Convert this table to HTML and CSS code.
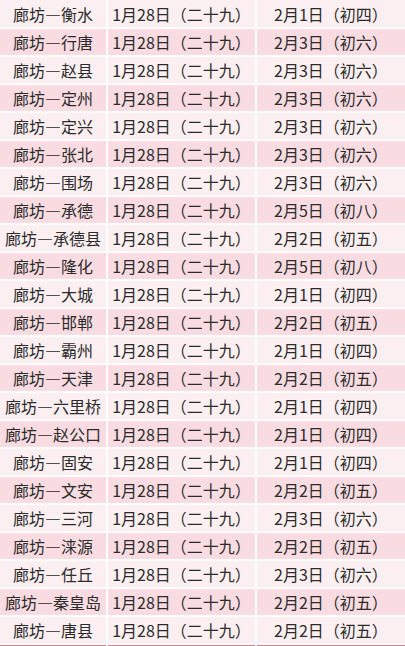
FILE: index.html
```html
<!DOCTYPE html>
<html lang="zh">
<head>
<meta charset="utf-8">
<link rel="stylesheet" href="styles.css">
</head>
<body>
<div class="table">
  <div class="row light"><div class="c">廊坊—衡水</div><div class="c">1月28日（二十九）</div><div class="c">2月1日（初四）</div></div>
  <div class="row dark"><div class="c">廊坊—行唐</div><div class="c">1月28日（二十九）</div><div class="c">2月3日（初六）</div></div>
  <div class="row light"><div class="c">廊坊—赵县</div><div class="c">1月28日（二十九）</div><div class="c">2月3日（初六）</div></div>
  <div class="row dark"><div class="c">廊坊—定州</div><div class="c">1月28日（二十九）</div><div class="c">2月3日（初六）</div></div>
  <div class="row light"><div class="c">廊坊—定兴</div><div class="c">1月28日（二十九）</div><div class="c">2月3日（初六）</div></div>
  <div class="row dark"><div class="c">廊坊—张北</div><div class="c">1月28日（二十九）</div><div class="c">2月3日（初六）</div></div>
  <div class="row light"><div class="c">廊坊—围场</div><div class="c">1月28日（二十九）</div><div class="c">2月3日（初六）</div></div>
  <div class="row dark"><div class="c">廊坊—承德</div><div class="c">1月28日（二十九）</div><div class="c">2月5日（初八）</div></div>
  <div class="row light"><div class="c">廊坊—承德县</div><div class="c">1月28日（二十九）</div><div class="c">2月2日（初五）</div></div>
  <div class="row dark"><div class="c">廊坊—隆化</div><div class="c">1月28日（二十九）</div><div class="c">2月5日（初八）</div></div>
  <div class="row light"><div class="c">廊坊—大城</div><div class="c">1月28日（二十九）</div><div class="c">2月1日（初四）</div></div>
  <div class="row dark"><div class="c">廊坊—邯郸</div><div class="c">1月28日（二十九）</div><div class="c">2月2日（初五）</div></div>
  <div class="row light"><div class="c">廊坊—霸州</div><div class="c">1月28日（二十九）</div><div class="c">2月1日（初四）</div></div>
  <div class="row dark"><div class="c">廊坊—天津</div><div class="c">1月28日（二十九）</div><div class="c">2月2日（初五）</div></div>
  <div class="row light"><div class="c">廊坊—六里桥</div><div class="c">1月28日（二十九）</div><div class="c">2月1日（初四）</div></div>
  <div class="row dark"><div class="c">廊坊—赵公口</div><div class="c">1月28日（二十九）</div><div class="c">2月1日（初四）</div></div>
  <div class="row light"><div class="c">廊坊—固安</div><div class="c">1月28日（二十九）</div><div class="c">2月1日（初四）</div></div>
  <div class="row dark"><div class="c">廊坊—文安</div><div class="c">1月28日（二十九）</div><div class="c">2月2日（初五）</div></div>
  <div class="row light"><div class="c">廊坊—三河</div><div class="c">1月28日（二十九）</div><div class="c">2月3日（初六）</div></div>
  <div class="row dark"><div class="c">廊坊—涞源</div><div class="c">1月28日（二十九）</div><div class="c">2月2日（初五）</div></div>
  <div class="row light"><div class="c">廊坊—任丘</div><div class="c">1月28日（二十九）</div><div class="c">2月3日（初六）</div></div>
  <div class="row dark"><div class="c">廊坊—秦皇岛</div><div class="c">1月28日（二十九）</div><div class="c">2月2日（初五）</div></div>
  <div class="row light"><div class="c">廊坊—唐县</div><div class="c">1月28日（二十九）</div><div class="c">2月2日（初五）</div></div>
  <div class="row head"><div class="c"></div><div class="c"></div><div class="c"></div></div>
</div>
</body>
</html>
```
FILE: styles.css
```css
html, body {
  margin: 0;
  padding: 0;
  background: #ffffff;
  overflow: hidden;
}
.table {
  display: flex;
  flex-direction: column;
  gap: 2px;
  padding-top: 0;
  font-family: "Noto Sans CJK SC", "Noto Sans", sans-serif;
  font-size: 16px;
  color: #2b2b2b;
}
.row {
  display: grid;
  grid-template-columns: 106px 147px 148px;
  column-gap: 2px;
  height: 26px;
}
.row:first-child {
  height: 27px;
}
.c {
  display: flex;
  align-items: center;
  justify-content: center;
  line-height: 1;
  white-space: nowrap;
}
.light .c {
  background: #fcefF1;
}
.dark .c {
  background: #f9dce1;
}
.head .c {
  background: #d9808f;
}
```
